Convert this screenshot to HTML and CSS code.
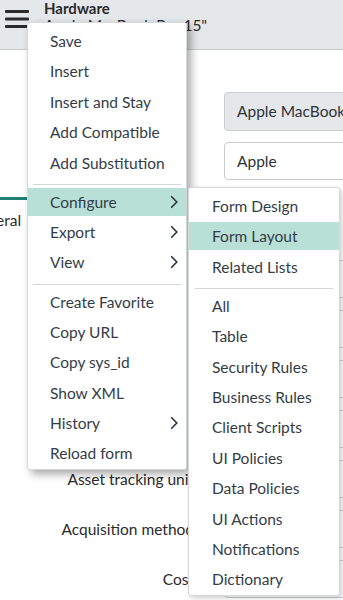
FILE: index.html
```html
<!DOCTYPE html>
<html lang="en">
<head>
    <meta charset="UTF-8">
    <meta name="viewport" content="width=device-width, initial-scale=1.0">
    <title>Hardware - Apple MacBook Pro 15"</title>
    <link rel="stylesheet" href="styles.css">
</head>
<body>
    <header class="topbar">
        <svg class="hamburger" width="24" height="18" viewBox="0 0 24 18">
            <rect x="0" y="0" width="24" height="3" rx="1"/>
            <rect x="0" y="7.5" width="24" height="3" rx="1"/>
            <rect x="0" y="15" width="24" height="3" rx="1"/>
        </svg>
        <div class="titles">
            <div class="title">Hardware</div>
            <div class="subtitle">Apple MacBook Pro 15"</div>
        </div>
    </header>

    <main class="form">
        <div class="field">
            <div class="label"></div>
            <div class="input readonly">Apple MacBook Pro 15"</div>
        </div>
        <div class="field">
            <div class="label"></div>
            <div class="input">Apple</div>
        </div>

        <div class="tabs">
            <div class="tab">General</div>
        </div>

        <div class="fields">
            <div class="field"><div class="label"></div><div class="input"></div></div>
            <div class="field"><div class="label"></div><div class="input"></div></div>
            <div class="field"><div class="label"></div><div class="input"></div></div>
            <div class="field"><div class="label"></div><div class="input"></div></div>
            <div class="field"><div class="label">Asset tracking unit</div><div class="input"></div></div>
            <div class="field"><div class="label">Acquisition method</div><div class="input"></div></div>
            <div class="field"><div class="label">Cost</div><div class="input"></div></div>
        </div>
    </main>

    <!-- Menú contextual del formulario -->
    <div class="menu main-menu">
        <div class="item">Save</div>
        <div class="item">Insert</div>
        <div class="item">Insert and Stay</div>
        <div class="item">Add Compatible</div>
        <div class="item">Add Substitution</div>
        <div class="sep"></div>
        <div class="item active">Configure
            <svg class="chev" width="8" height="14" viewBox="0 0 8 14"><path d="M1.2 1.2 L6.8 7 L1.2 12.8"/></svg>
        </div>
        <div class="item">Export
            <svg class="chev" width="8" height="14" viewBox="0 0 8 14"><path d="M1.2 1.2 L6.8 7 L1.2 12.8"/></svg>
        </div>
        <div class="item">View
            <svg class="chev" width="8" height="14" viewBox="0 0 8 14"><path d="M1.2 1.2 L6.8 7 L1.2 12.8"/></svg>
        </div>
        <div class="sep"></div>
        <div class="item">Create Favorite</div>
        <div class="item">Copy URL</div>
        <div class="item">Copy sys_id</div>
        <div class="item">Show XML</div>
        <div class="item">History
            <svg class="chev" width="8" height="14" viewBox="0 0 8 14"><path d="M1.2 1.2 L6.8 7 L1.2 12.8"/></svg>
        </div>
        <div class="item">Reload form</div>
    </div>

    <div class="menu sub-menu">
        <div class="item">Form Design</div>
        <div class="item active">Form Layout</div>
        <div class="item">Related Lists</div>
        <div class="sep"></div>
        <div class="item">All</div>
        <div class="item">Table</div>
        <div class="item">Security Rules</div>
        <div class="item">Business Rules</div>
        <div class="item">Client Scripts</div>
        <div class="item">UI Policies</div>
        <div class="item">Data Policies</div>
        <div class="item">UI Actions</div>
        <div class="item">Notifications</div>
        <div class="item">Dictionary</div>
    </div>
</body>
</html>
```

FILE: styles.css
```css
body {
    font-family: Lato, "Liberation Sans", sans-serif;
    font-size: 15.5px;
    color: #2e3238;
    margin: 0;
    padding: 0;
    background: #fff;
    overflow: hidden;
    height: 600px;
    position: relative;
}
.topbar {
    display: flex;
    align-items: flex-start;
    height: 50px;
    background: #e4e8eb;
    border-bottom: 1px solid #c9cdd1;
    box-sizing: border-box;
}
.hamburger {
    fill: #2b2b2b;
    margin: 10px 0 0 5px;
    flex-shrink: 0;
}
.titles {
    margin-left: 15px;
    white-space: nowrap;
}
.title {
    font-weight: bold;
    font-size: 15px;
    line-height: 17px;
    color: #2b2b2b;
}
.subtitle {
    line-height: 17px;
    color: #2b2b2b;
}
.form {
    padding-top: 42px;
}
.field {
    display: grid;
    grid-template-columns: 194px 1fr;
    column-gap: 30px;
    align-items: center;
}
.field + .field {
    margin-top: 11px;
}
.label {
    text-align: right;
    white-space: nowrap;
    color: #2b2b2b;
}
.input {
    height: 38px;
    border: 1px solid #c9cdd1;
    border-radius: 4px;
    box-sizing: border-box;
    padding-left: 12px;
    line-height: 36px;
    white-space: nowrap;
    overflow: hidden;
    width: 200px;
    color: #2e3238;
}
.input.readonly {
    background: #e4e8eb;
    height: 39px;
    line-height: 37px;
}
.tabs {
    margin-top: 17px;
    height: 43px;
}
.tab {
    width: 110px;
    margin-left: -34px;
    border-top: 3px solid #1f8073;
    line-height: 40px;
    padding-left: 2px;
    color: #2b2b2b;
}
.fields {
    padding-top: 20px;
    display: flex;
    flex-direction: column;
    gap: 12px;
}
.fields .field + .field {
    margin-top: 0;
}
/* Menús */
.menu {
    position: absolute;
    background: #fff;
    border: 1px solid #d6d9dc;
    border-radius: 3px;
    box-sizing: border-box;
    display: flex;
    flex-direction: column;
    gap: 2.4px;
    padding: 4px 0 2px;
    color: #343d47;
}
.main-menu {
    left: 27px;
    top: 22px;
    width: 160px;
    box-shadow: 4px 4px 9px rgba(0, 0, 0, 0.35);
    z-index: 1;
}
.sub-menu {
    left: 188px;
    top: 187px;
    width: 152px;
    box-shadow: 2px 2px 5px rgba(0, 0, 0, 0.2);
    z-index: 2;
}
.item {
    height: 28px;
    display: flex;
    align-items: center;
    justify-content: space-between;
    padding: 0 8px 0 22px;
    white-space: nowrap;
}
.sub-menu .item {
    padding-left: 23px;
}
.item.active {
    background: #b8e0d6;
}
.chev {
    fill: none;
    stroke: #2b3340;
    stroke-width: 1.6;
}
.sep {
    height: 1px;
    background: #d4d7da;
    margin: 5.3px 5px 0;
}
.sub-menu .sep {
    margin: 5.3px 6px 0;
}
```
